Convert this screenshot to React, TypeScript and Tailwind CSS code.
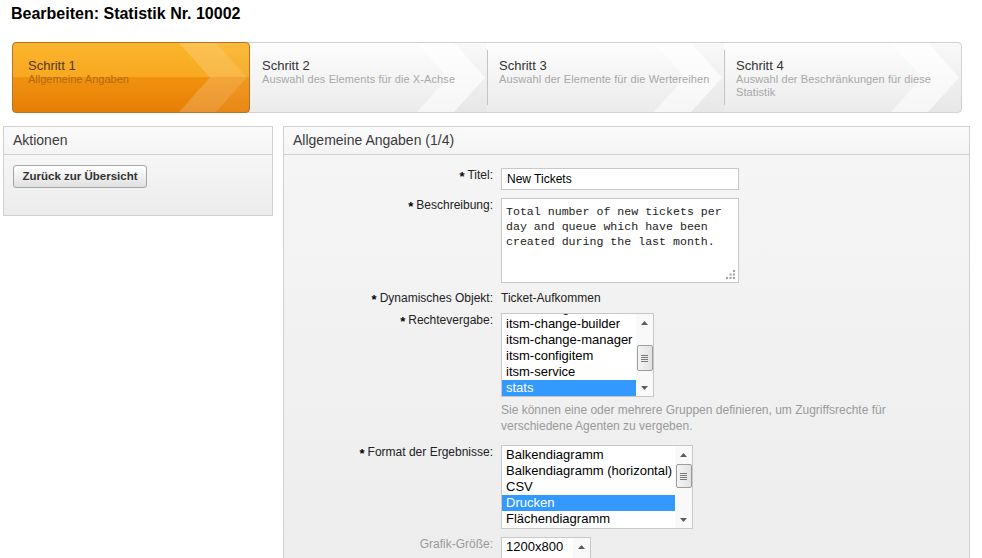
import React from 'react';

const steps = [
    { title: 'Schritt 2', text: 'Auswahl des Elements für die X-Achse', w: 'w-[238px]', tw: 'w-[215px]', sep: false },
    { title: 'Schritt 3', text: 'Auswahl der Elemente für die Wertereihen', w: 'w-[237px]', tw: 'w-[222px]', sep: true },
    { title: 'Schritt 4', text: 'Auswahl der Beschränkungen für diese Statistik', w: 'flex-1', tw: 'w-[200px]', sep: true },
];

const Chevron = ({ orange }: { orange?: boolean }) => (
    <svg
        className="pointer-events-none absolute right-0 top-0 h-full w-[70px]"
        viewBox="0 0 70 70"
        preserveAspectRatio="none"
    >
        <polygon points="0,0 37,0 68,35 37,70 0,70 31,35" fill="#ffffff" fillOpacity={orange ? 0.18 : 0.55} />
        <polygon points="37,0 70,0 70,70 37,70 68,35" fill={orange ? '#ffffff' : '#000000'} fillOpacity={orange ? 0.07 : 0.015} />
    </svg>
);

const Star = () => <span className="mr-[3px] inline-block translate-y-[2px] text-[13px] font-bold leading-none text-black">*</span>;

const Arrow = ({ down }: { down?: boolean }) => (
    <div className="flex h-[17px] items-center justify-center">
        <svg width="7" height="4" viewBox="0 0 7 4">
            <path d={down ? 'M0 0 L7 0 L3.5 4 Z' : 'M0 4 L3.5 0 L7 4 Z'} fill="#5c5c5c" />
        </svg>
    </div>
);

const Scrollbar = ({ thumb }: { thumb?: string }) => (
    <div className="flex w-[17px] shrink-0 flex-col bg-[#f9f9f9]">
        <Arrow />
        <div className="flex-1">
            {thumb && (
                <div className={`mx-auto flex w-[16px] flex-col items-center justify-center gap-[1px] rounded-[2px] border border-[#9c9c9c] bg-[linear-gradient(to_right,#f4f4f4,#e2e2e2)] ${thumb}`}>
                    <div className="h-px w-[7px] bg-[#7a7a7a]" />
                    <div className="h-px w-[7px] bg-[#7a7a7a]" />
                    <div className="h-px w-[7px] bg-[#7a7a7a]" />
                    <div className="h-px w-[7px] bg-[#7a7a7a]" />
                </div>
            )}
        </div>
        <Arrow down />
    </div>
);

interface ListBoxProps {
    items: string[];
    selected?: string;
    className: string;
    offset: string;
    thumb?: string;
}

const ListBox: React.FC<ListBoxProps> = ({ items, selected, className, offset, thumb }) => (
    <div className={`flex h-[84px] border border-[#c8c8c8] bg-white ${className}`}>
        <div className="flex-1 overflow-hidden">
            <div className={offset}>
                {items.map((it) => (
                    <div
                        key={it}
                        className={`h-[16px] whitespace-nowrap pl-[4px] text-[13px] leading-[16px] ${it === selected ? 'bg-[#3399ff] text-white' : 'text-black'}`}
                    >
                        {it}
                    </div>
                ))}
            </div>
        </div>
        <Scrollbar thumb={thumb} />
    </div>
);

const Row = ({ label, children, className = '', muted, star = true }: { label: string; children: React.ReactNode; className?: string; muted?: boolean; star?: boolean }) => (
    <div className={`flex items-start ${className}`}>
        <div className={`h-[15px] w-[210px] shrink-0 pr-[1px] text-right leading-[15px] ${muted ? 'text-[#9a9a9a]' : 'text-[#222]'}`}>
            {star && <Star />}
            {label}
        </div>
        <div className="ml-[7px]">{children}</div>
    </div>
);

export default function App() {
    return (
        <div className="min-h-screen bg-white font-['Liberation_Sans',Arial,sans-serif] text-[12px] text-[#333]">
            <h1 className="pl-[11px] pt-[4px] text-[16px] font-bold leading-[20px] text-black">Bearbeiten: Statistik Nr. 10002</h1>

            <div className="ml-[12px] mt-[18px] flex h-[71px] w-[950px] rounded-[4px] border border-[#d2d2d2] bg-[linear-gradient(to_bottom,#fdfdfd,#ebebeb)]">
                <div className="relative -m-px w-[238px] overflow-hidden rounded-[4px] border border-[#b5732a] bg-[linear-gradient(to_bottom,#fbb52c_0%,#f7a820_50%,#f1920f_50%,#e67e06_100%)] pl-[15px] pt-[15px]">
                    <Chevron orange />
                    <div className="relative text-[13px] leading-[15px] text-[#51391c]">Schritt 1</div>
                    <div className="relative text-[11px] leading-[13px] text-[#b26a0f]">Allgemeine Angaben</div>
                </div>
                {steps.map((s) => (
                    <div key={s.title} className={`relative flex ${s.w}`}>
                        <Chevron />
                        {s.sep && <div className="relative h-[55px] w-px self-center bg-[#c4c4c4]" />}
                        <div className={`relative pt-[15px] ${s.sep ? 'pl-[11px]' : 'pl-[13px]'}`}>
                            <div className="text-[13px] leading-[15px] text-[#333]">{s.title}</div>
                            <div className={`text-[11px] leading-[13px] tracking-[0.1px] text-[#a8a8a8] ${s.tw}`}>{s.text}</div>
                        </div>
                    </div>
                ))}
            </div>

            <div className="ml-[3px] mt-[13px] flex items-start gap-[10px]">
                <div className="w-[270px] border border-[#d0d0d0]">
                    <div className="flex h-[28px] items-center border-b border-[#d0d0d0] bg-[linear-gradient(to_bottom,#fbfbfb,#f4f4f4)] pl-[9px] text-[14px] text-[#3a3a3a]">
                        Aktionen
                    </div>
                    <div className="bg-[linear-gradient(to_bottom,#f6f6f6,#ececec)] pb-[27px] pl-[9px] pt-[10px]">
                        <button className="h-[23px] w-[134px] rounded-[3px] border border-[#a6a6a6] bg-[linear-gradient(to_bottom,#ffffff,#e0e0e0)] text-[11.5px] font-bold text-[#333]">
                            Zurück zur Übersicht
                        </button>
                    </div>
                </div>

                <div className="w-[687px] border border-[#d0d0d0]">
                    <div className="flex h-[28px] items-center border-b border-[#d0d0d0] bg-[linear-gradient(to_bottom,#fbfbfb,#f4f4f4)] pl-[9px] text-[14px] text-[#3a3a3a]">
                        Allgemeine Angaben (1/4)
                    </div>
                    <div className="bg-[linear-gradient(to_bottom,#f5f5f5,#ebebeb)] pb-[40px] pt-[13px]">
                        <Row label="Titel:">
                            <div className="flex h-[22px] w-[238px] items-center border border-[#c8c8c8] bg-white pl-[5px] text-[12px] text-black">
                                New Tickets
                            </div>
                        </Row>
                        <Row label="Beschreibung:" className="mt-[8px]">
                            <div className="relative h-[85px] w-[238px] border border-[#c8c8c8] bg-white pl-[4px] pt-[5px] font-['Liberation_Mono',monospace] text-[11.6px] leading-[15px] text-[#222]">
                                Total number of new tickets per
                                <br />
                                day and queue which have been
                                <br />
                                created during the last month.
                                <svg className="absolute bottom-[3px] right-[3px]" width="9" height="9" viewBox="0 0 9 9">
                                    <rect x="7" y="0" width="2" height="2" fill="#a0a0a0" />
                                    <rect x="3.5" y="3.5" width="2" height="2" fill="#a0a0a0" />
                                    <rect x="7" y="3.5" width="2" height="2" fill="#a0a0a0" />
                                    <rect x="0" y="7" width="2" height="2" fill="#a0a0a0" />
                                    <rect x="3.5" y="7" width="2" height="2" fill="#a0a0a0" />
                                    <rect x="7" y="7" width="2" height="2" fill="#a0a0a0" />
                                </svg>
                            </div>
                        </Row>
                        <Row label="Dynamisches Objekt:" className="mt-[8px]">
                            <div className="leading-[15px] text-[#222]">Ticket-Aufkommen</div>
                        </Row>
                        <Row label="Rechtevergabe:" className="mt-[7px]">
                            <ListBox
                                className="w-[153px]"
                                offset="-mt-[14px]"
                                thumb="mt-[14px] h-[26px]"
                                selected="stats"
                                items={['itsm-change', 'itsm-change-builder', 'itsm-change-manager', 'itsm-configitem', 'itsm-service', 'stats', 'users']}
                            />
                            <div className="mt-[5px] w-[420px] leading-[16px] text-[#9a9a9a]">
                                Sie können eine oder mehrere Gruppen definieren, um Zugriffsrechte für verschiedene Agenten zu vergeben.
                            </div>
                        </Row>
                        <Row label="Format der Ergebnisse:" className="mt-[11px]">
                            <ListBox
                                className="w-[192px]"
                                offset="mt-[1px]"
                                thumb="mt-[1px] h-[24px]"
                                selected="Drucken"
                                items={['Balkendiagramm', 'Balkendiagramm (horizontal)', 'CSV', 'Drucken', 'Flächendiagramm', 'Liniendiagramm', 'Punktdiagramm']}
                            />
                        </Row>
                        <Row label="Grafik-Größe:" className="mt-[8px]" muted star={false}>
                            <ListBox className="w-[90px]" offset="mt-[1px]" items={['1200x800', '1600x1200', '800x600']} />
                        </Row>
                    </div>
                </div>
            </div>
        </div>
    );
}
